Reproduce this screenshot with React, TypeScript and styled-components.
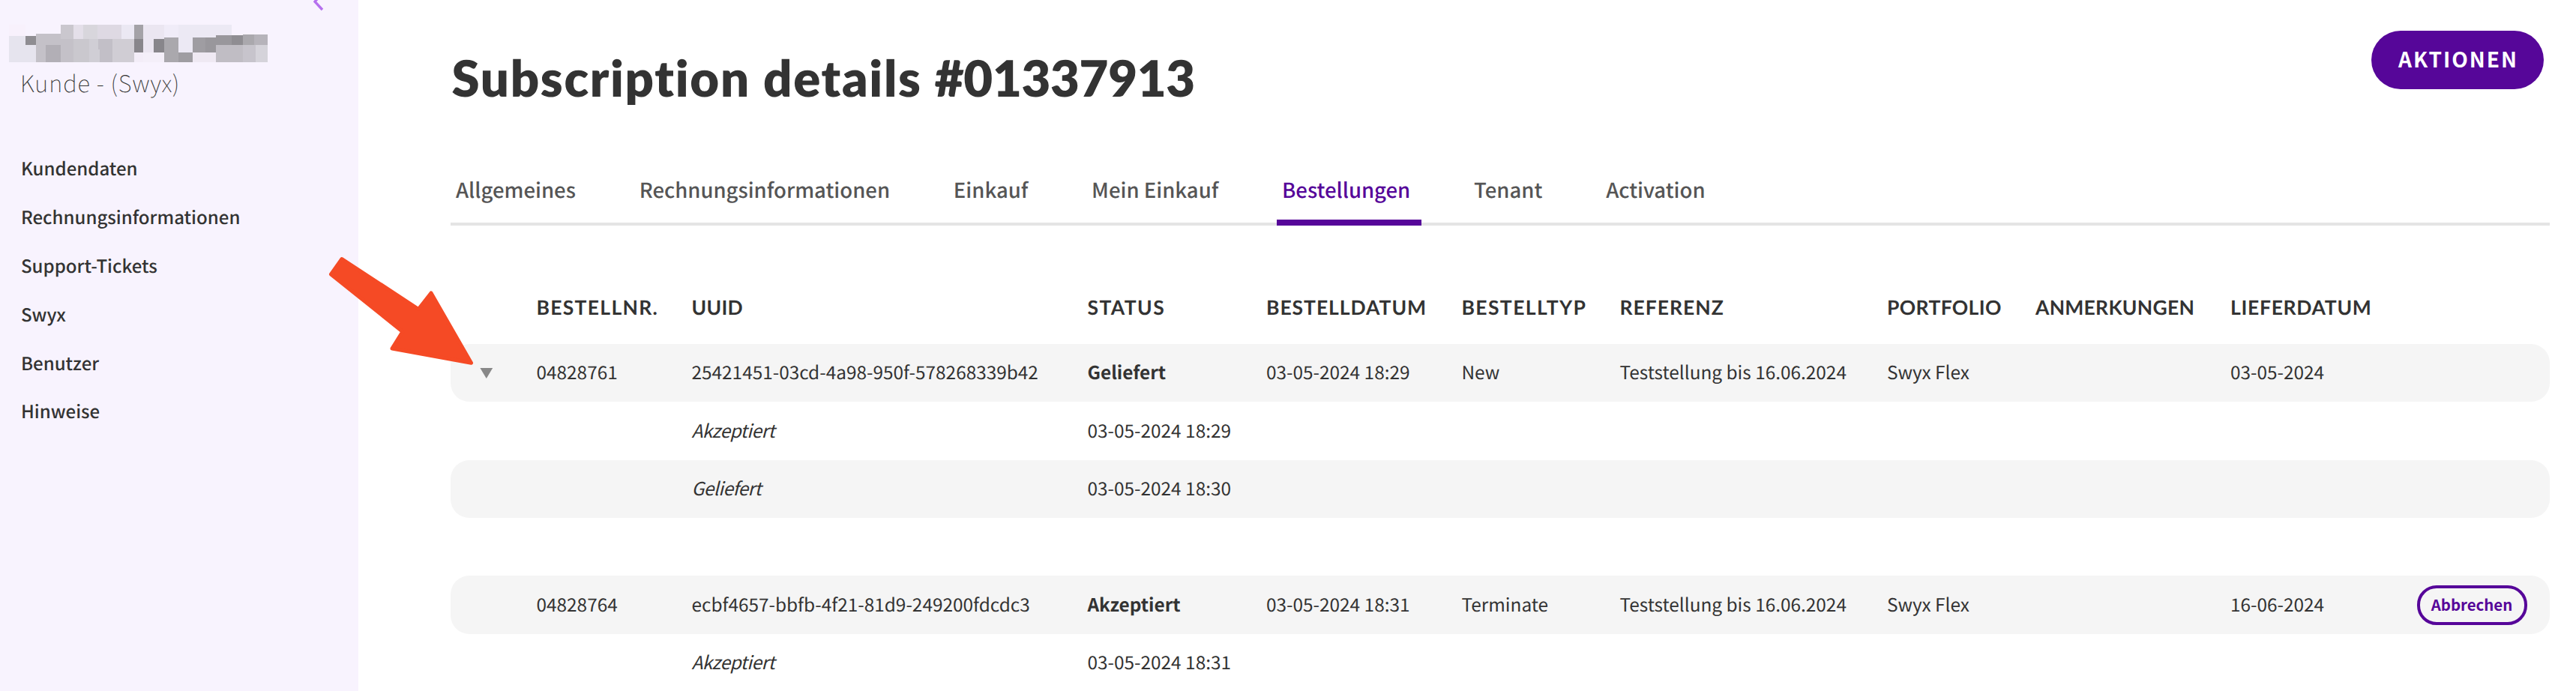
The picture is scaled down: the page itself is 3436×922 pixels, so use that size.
import React from 'react';
import styled, { createGlobalStyle, css } from 'styled-components';

const sans = '"Noto Sans CJK SC", "Noto Sans", sans-serif';
const display = 'Lato, "Open Sans", sans-serif';
const purple = '#560699';
const ink = '#333333';

const GlobalStyle = createGlobalStyle`
  *, *::before, *::after { box-sizing: border-box; }
  html, body { margin: 0; padding: 0; background: #ffffff; }
  body {
    font-family: ${sans};
    color: ${ink};
    overflow: hidden;
    text-rendering: geometricPrecision;
  }
`;

const Page = styled.div`
  position: relative;
  display: flex;
  height: 922px;
  overflow: hidden;
`;

const Sidebar = styled.aside`
  flex: 0 0 477.5px;
  background: #f8f3fe;
`;

const CollapseButton = styled.div`
  display: flex;
  justify-content: flex-end;
  height: 33px;
  padding-right: 46px;
`;

const CustomerName = styled.div`
  height: 50px;
  padding-left: 12px;
  svg { display: block; }
`;

const CustomerType = styled.div`
  margin-top: 1px;
  padding-left: 27px;
  font-weight: 100;
  font-size: 31px;
  line-height: 52px;
  letter-spacing: 1px;
`;

const SideNav = styled.nav`
  display: flex;
  flex-direction: column;
  margin-top: 55px;
  padding-left: 28px;
`;

const SideLink = styled.a`
  font-weight: 500;
  font-size: 24.05px;
  line-height: 65px;
  height: 64.9px;
`;

const Main = styled.main`
  flex: 1;
  min-width: 0;
  padding: 41px 35.5px 0 123.5px;
`;

const TitleBar = styled.header`
  display: flex;
  justify-content: space-between;
  align-items: flex-start;
  height: 181px;
  padding: 0 7.5px 0 1.5px;
`;

const Title = styled.h1`
  margin: 23px 0 0;
  font-family: ${display};
  font-weight: 800;
  font-size: 67px;
  line-height: 80px;
  letter-spacing: 1.7px;
  white-space: nowrap;
`;

const OrderNumber = styled.span`
  letter-spacing: -0.3px;
`;

const ActionsButton = styled.button`
  width: 230px;
  height: 78px;
  padding: 0 0 4px 2px;
  border: 0;
  border-radius: 39px;
  background: ${purple};
  color: #ffffff;
  font-family: ${sans};
  font-weight: 700;
  font-size: 28px;
  line-height: 40px;
  letter-spacing: 2px;
`;

const Tabs = styled.nav`
  display: flex;
  gap: 62.8px;
  height: 79px;
  box-shadow: inset 0 -4px #e4e4e4;
`;

const Tab = styled.a<{ $active?: boolean }>`
  padding: 0 15px 0 7px;
  font-weight: 500;
  font-size: 27.5px;
  line-height: 60px;
  white-space: nowrap;
  color: #555555;
  ${(p) => p.$active && css`
    color: ${purple};
    box-shadow: inset 0 -8px ${purple};
  `}
`;

const columnsGrid = css`
  display: grid;
  grid-template-columns: 114.5px 207px 528px 238.5px 260.5px 211px 356.5px 198px 260px 248.5px 1fr;
`;

const TableHead = styled.div`
  ${columnsGrid}
  height: 158px;
  padding-top: 96px;
`;

const HeadCell = styled.div<{ $track: number }>`
  font-family: ${display};
  font-weight: 700;
  font-size: 26.5px;
  line-height: 26px;
  letter-spacing: ${(p) => p.$track}px;
  white-space: nowrap;
`;

const Row = styled.div<{ $shaded?: boolean }>`
  ${columnsGrid}
  align-items: center;
  height: 77.35px;
  border-radius: 25px;
  background: ${(p) => (p.$shaded ? '#f5f5f5' : 'transparent')};
`;

const Cell = styled.div<{ $kind?: 'strong' | 'event' }>`
  padding-bottom: 1px;
  font-size: 24.38px;
  line-height: 36px;
  white-space: nowrap;
  ${(p) => p.$kind === 'strong' && css`font-weight: 700;`}
  ${(p) => p.$kind === 'event' && css`font-style: italic; letter-spacing: -0.5px;`}
`;

const Toggle = styled.div`
  padding-left: 39px;
  svg { display: block; }
`;

const CancelButton = styled.button`
  width: 147px;
  height: 53px;
  padding: 0 0 3px;
  border: 4px solid ${purple};
  border-radius: 26px;
  background: transparent;
  color: ${purple};
  font-family: ${sans};
  font-weight: 700;
  font-size: 20.4px;
  line-height: 30px;
`;

const Pointer = styled.svg`
  position: absolute;
  left: 430px;
  top: 335px;
`;

const navItems = ['Kundendaten', 'Rechnungsinformationen', 'Support-Tickets', 'Swyx', 'Benutzer', 'Hinweise'];
const tabItems = ['Allgemeines', 'Rechnungsinformationen', 'Einkauf', 'Mein Einkauf', 'Bestellungen', 'Tenant', 'Activation'];

const headings: [string, number][] = [
  ['', 0],
  ['BESTELLNR.', 1.3],
  ['UUID', 0.3],
  ['STATUS', 1.4],
  ['BESTELLDATUM', 0.95],
  ['BESTELLTYP', 1.38],
  ['REFERENZ', 1],
  ['PORTFOLIO', 0.35],
  ['ANMERKUNGEN', 0.25],
  ['LIEFERDATUM', 0.7],
];

interface Order {
  nr: string;
  uuid: string;
  status: string;
  ordered: string;
  type: string;
  reference: string;
  portfolio: string;
  note: string;
  delivery: string;
  open?: boolean;
  cancellable?: boolean;
  events: [string, string][];
}

const orders: Order[] = [
  {
    nr: '04828761',
    uuid: '25421451-03cd-4a98-950f-578268339b42',
    status: 'Geliefert',
    ordered: '03-05-2024 18:29',
    type: 'New',
    reference: 'Teststellung bis 16.06.2024',
    portfolio: 'Swyx Flex',
    note: '',
    delivery: '03-05-2024',
    open: true,
    events: [
      ['Akzeptiert', '03-05-2024 18:29'],
      ['Geliefert', '03-05-2024 18:30'],
    ],
  },
  {
    nr: '04828764',
    uuid: 'ecbf4657-bbfb-4f21-81d9-249200fdcdc3',
    status: 'Akzeptiert',
    ordered: '03-05-2024 18:31',
    type: 'Terminate',
    reference: 'Teststellung bis 16.06.2024',
    portfolio: 'Swyx Flex',
    note: '',
    delivery: '16-06-2024',
    cancellable: true,
    events: [['Akzeptiert', '03-05-2024 18:31']],
  },
];

/* x, y, width, height, fill of each mosaic tile over the redacted name */
const tiles: [number, number, number, number, string][] = [
  [0, 0, 66, 45, '#f8f1fc'],
  [0, 45, 108, 105, '#e6e4ee'],
  [66, 45, 42, 36, '#8f8d92'],
  [108, 36, 99, 114, '#c4c1c8'],
  [147, 81, 60, 69, '#b2afb6'],
  [207, 0, 51, 57, '#cac7ce'],
  [258, 0, 39, 57, '#e4dfe9'],
  [297, 0, 58, 57, '#d8d6dc'],
  [355, 0, 95, 57, '#ded9e3'],
  [450, 0, 51, 57, '#ebe8f3'],
  [207, 57, 51, 93, '#c4c1c8'],
  [258, 57, 63, 93, '#cac8ce'],
  [321, 57, 42, 93, '#d0ced5'],
  [357, 57, 57, 42, '#c2bfc7'],
  [363, 99, 51, 51, '#c2bfc7'],
  [414, 57, 87, 93, '#d0cdd4'],
  [501, 0, 36, 57, '#a4a2a7'],
  [501, 57, 36, 54, '#88868b'],
  [501, 111, 36, 39, '#f3edf8'],
  [537, 0, 84, 111, '#ebe6f1'],
  [537, 111, 84, 39, '#f4eff9'],
  [579, 57, 42, 54, '#88868b'],
  [621, 0, 57, 51, '#f0ecf8'],
  [621, 51, 57, 99, '#aaa8ad'],
  [678, 0, 213, 51, '#ece9f4'],
  [678, 51, 57, 60, '#ece9f4'],
  [678, 111, 57, 39, '#9f9da2'],
  [735, 51, 51, 60, '#9f9da2'],
  [786, 51, 42, 60, '#99979c'],
  [735, 111, 93, 39, '#efe9f3'],
  [828, 42, 63, 39, '#99979c'],
  [891, 42, 45, 39, '#8f8d92'],
  [936, 39, 45, 42, '#aaa8ad'],
  [981, 39, 54, 42, '#b6b3ba'],
  [828, 81, 108, 69, '#c0bdc4'],
  [936, 81, 51, 69, '#c7c4cc'],
  [987, 81, 48, 69, '#d5d3da'],
];

function OrderRows({ order }: { order: Order }) {
  return (
    <>
      <Row $shaded>
        <Toggle>
          {order.open && (
            <svg width="18" height="16" viewBox="0 0 18 16">
              <path d="M0.4 1H17.2L8.8 15Z" fill="#888888" />
            </svg>
          )}
        </Toggle>
        <Cell>{order.nr}</Cell>
        <Cell>{order.uuid}</Cell>
        <Cell $kind="strong">{order.status}</Cell>
        <Cell>{order.ordered}</Cell>
        <Cell>{order.type}</Cell>
        <Cell>{order.reference}</Cell>
        <Cell>{order.portfolio}</Cell>
        <Cell>{order.note}</Cell>
        <Cell>{order.delivery}</Cell>
        {order.cancellable && <CancelButton>Abbrechen</CancelButton>}
      </Row>
      {order.events.map(([name, date], i) => (
        <Row key={name} $shaded={i % 2 === 1}>
          <Cell />
          <Cell />
          <Cell $kind="event">{name}</Cell>
          <Cell>{date}</Cell>
        </Row>
      ))}
      <Row />
    </>
  );
}

export default function App() {
  return (
    <>
      <GlobalStyle />
      <Page>
        <Sidebar>
          <CollapseButton>
            <svg width="14" height="16" viewBox="0 0 14 16">
              <path d="M12 -9L2 2.2L12 13" fill="none" stroke="#b570ee" strokeWidth="3.4" />
            </svg>
          </CollapseButton>
          <CustomerName>
            <svg width="345" height="50" viewBox="0 0 1035 150" shapeRendering="crispEdges">
              {tiles.map(([x, y, w, h, fill], i) => (
                <rect key={i} x={x} y={y} width={w} height={h} fill={fill} />
              ))}
            </svg>
          </CustomerName>
          <CustomerType>Kunde - (Swyx)</CustomerType>
          <SideNav>
            {navItems.map((label) => (
              <SideLink key={label}>{label}</SideLink>
            ))}
          </SideNav>
        </Sidebar>
        <Main>
          <TitleBar>
            <Title>
              Subscription details <OrderNumber>#01337913</OrderNumber>
            </Title>
            <ActionsButton>AKTIONEN</ActionsButton>
          </TitleBar>
          <Tabs>
            {tabItems.map((label) => (
              <Tab key={label} $active={label === 'Bestellungen'}>
                {label}
              </Tab>
            ))}
          </Tabs>
          <TableHead>
            {headings.map(([label, track], i) => (
              <HeadCell key={i} $track={track}>
                {label}
              </HeadCell>
            ))}
          </TableHead>
          {orders.map((order) => (
            <OrderRows key={order.nr} order={order} />
          ))}
        </Main>
        <Pointer width="210" height="160" viewBox="430 335 210 160">
          <path
            d="M456 345.5L558.2 412.5L575 391L628.5 484.3L523 465L537 442.5L441.5 366Z"
            fill="#f54a25"
            stroke="#f54a25"
            strokeWidth="5"
            strokeLinejoin="round"
          />
        </Pointer>
      </Page>
    </>
  );
}
